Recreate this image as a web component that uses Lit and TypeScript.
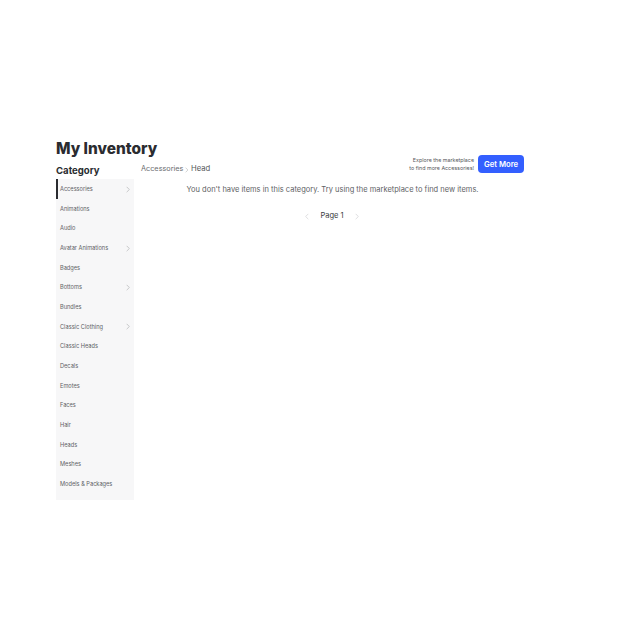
import { LitElement, html, css, svg } from "lit";
import { customElement } from "lit/decorators.js";

const CATS: [string, boolean][] = [
  ["Accessories", true], ["Animations", false], ["Audio", false], ["Avatar Animations", true],
  ["Badges", false], ["Bottoms", true], ["Bundles", false], ["Classic Clothing", true],
  ["Classic Heads", false], ["Decals", false], ["Emotes", false], ["Faces", false],
  ["Hair", false], ["Heads", false], ["Meshes", false], ["Models & Packages", false],
];

const chev = (d: string, cls: string) => html`<svg class=${cls} viewBox="0 0 6 10" fill="none">${svg`<path d=${d} stroke="currentColor" stroke-width="0.9"/>`}</svg>`;
const RIGHT = "M1 1l4 4-4 4";
const LEFT = "M5 1L1 5l4 4";

@customElement("app-root")
export class AppRoot extends LitElement {
  static styles = css`
    :host { display: block; width: 640px; height: 640px; background: #fff; font-family: Inter, "Liberation Sans", sans-serif; color: #393b3d; overflow: hidden; }
    .page { padding: 140px 116px 0 56px; }
    h1 { margin: 0; font-size: 15.4px; line-height: 17px; font-weight: 800; color: #2a2c30; }
    .body { display: grid; grid-template-columns: 78px 1fr; column-gap: 7px; margin-top: 6px; }
    h2 { margin: 0; font-size: 9.6px; line-height: 16px; font-weight: 700; color: #2a2c30; }
    .side { width: 78px; }
    .list { background: #f7f7f8; height: 321px; padding-top: 0.3px; box-sizing: border-box; }
    .row { position: relative; height: 19.67px; display: flex; align-items: center; justify-content: space-between; padding: 0 4px; font-size: 5.65px; color: #606265; box-sizing: border-box; }
    .row.active::before { content: ""; position: absolute; left: 0; top: -0.3px; width: 1.5px; height: 20px; background: #2a2c30; }
    .chev { width: 4px; height: 7px; color: #a8aaad; }
    .main { min-width: 0; margin-top: -8px; }
    .top { display: flex; justify-content: space-between; align-items: flex-end; height: 18px; }
    .crumb { font-size: 7.3px; line-height: 10px; color: #6b6d70; display: flex; align-items: center; gap: 2px; padding-top: 1px; position: relative; top: 1px; }
    .crumb .head { color: #55575a; font-size: 7.7px; }
    .crumb .chev { width: 3.5px; height: 6px; margin-top: 1px; }
    .promo { display: flex; align-items: center; gap: 4px; align-self: stretch; }
    .promo p { margin: 0; font-size: 5.35px; line-height: 8px; text-align: right; color: #55575a; }
    .btn { width: 46px; height: 18px; background: #335fff; color: #fff; border-radius: 4px; font-size: 7.7px; font-weight: 600; display: flex; align-items: center; justify-content: center; }
    .empty { margin: 11px 0 0; text-align: center; font-size: 7.5px; line-height: 12px; color: #606265; }
    .pager { display: flex; justify-content: center; align-items: center; gap: 11px; margin-top: 15px; padding-right: 1px; font-size: 7.5px; line-height: 10px; color: #393b3d; }
    .pager .chev { width: 4px; height: 7px; color: #c9cacc; }
  `;

  render() {
    return html`<div class="page">
      <h1>My Inventory</h1>
      <div class="body">
        <div class="side">
          <h2>Category</h2>
          <div class="list">
            ${CATS.map(([n, c], i) => html`<div class="row ${i === 0 ? "active" : ""}"><span>${n}</span>${c ? chev(RIGHT, "chev") : ""}</div>`)}
          </div>
        </div>
        <div class="main">
          <div class="top">
            <div class="crumb"><span>Accessories</span>${chev(RIGHT, "chev")}<span class="head">Head</span></div>
            <div class="promo"><p>Explore the marketplace<br />to find more Accessories!</p><div class="btn">Get More</div></div>
          </div>
          <p class="empty">You don't have items in this category. Try using the marketplace to find new items.</p>
          <div class="pager">${chev(LEFT, "chev")}<span>Page 1</span>${chev(RIGHT, "chev")}</div>
        </div>
      </div>
    </div>`;
  }
}
